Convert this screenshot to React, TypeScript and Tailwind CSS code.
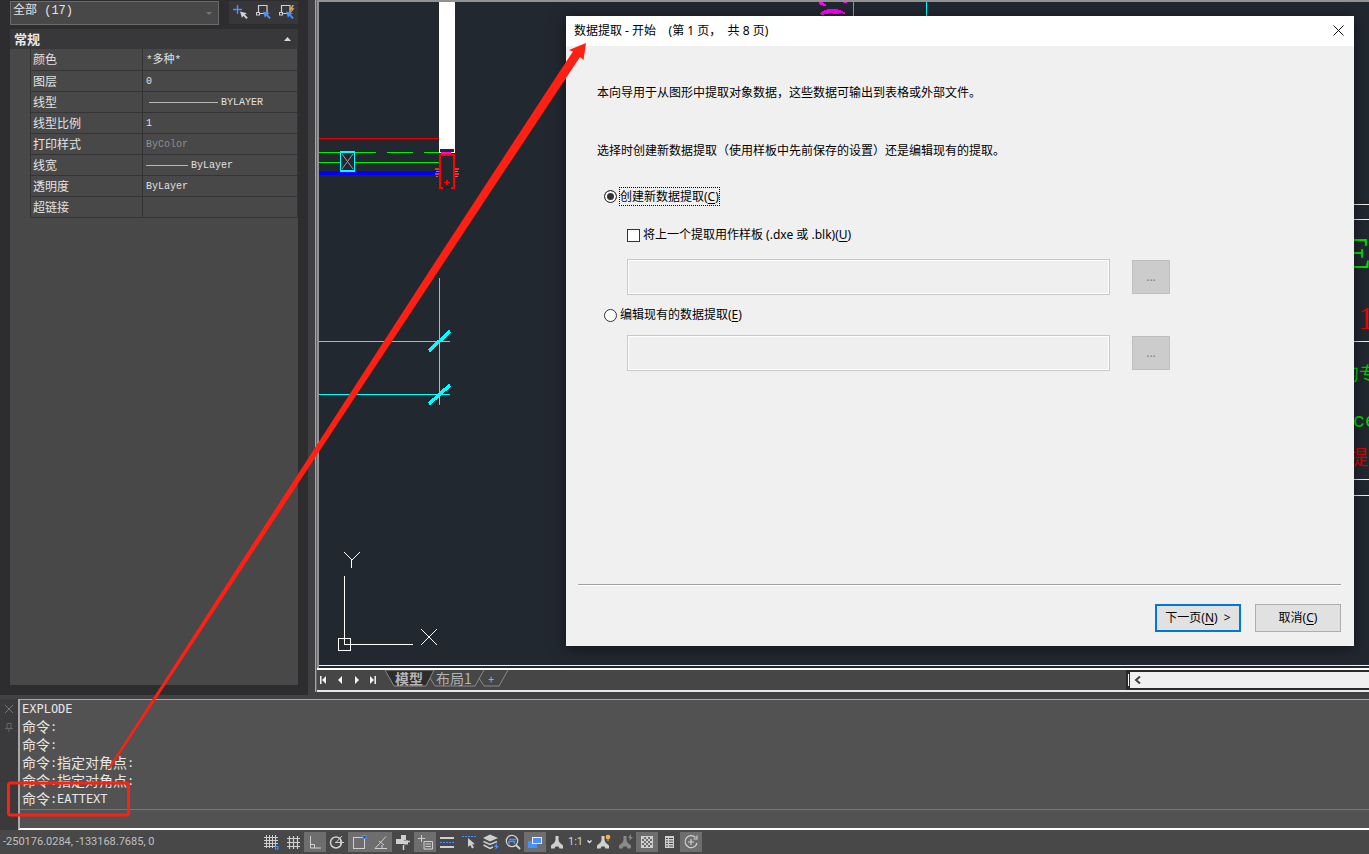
import type { ReactNode } from "react";

const SONG = "font-['Liberation_Mono','Noto_Sans_CJK_SC',monospace]";
const INK = "#cfcfcf";
const BLUE = "#4a90ff";

type Row = { label: string; value: string; line?: "long" | "short"; dim?: boolean; cjk?: boolean };

const rows: Row[] = [
  { label: "颜色", value: "*多种*", cjk: true },
  { label: "图层", value: "0" },
  { label: "线型", value: "BYLAYER", line: "long" },
  { label: "线型比例", value: "1" },
  { label: "打印样式", value: "ByColor", dim: true },
  { label: "线宽", value: "ByLayer", line: "short" },
  { label: "透明度", value: "ByLayer" },
  { label: "超链接", value: "" },
];

function PickIcon({ kind }: { kind: "add" | "select" | "quick" }) {
  const arrow = kind === "add" ? "#d4d4d4" : BLUE;
  return (
    <svg width="18" height="18" viewBox="0 0 18 18" fill="none" aria-hidden="true">
      {kind === "add" ? (
        <path d="M1 5.500h9M5.500 1v9" stroke={BLUE} strokeWidth="1.400" />
      ) : (
        <>
          <path d="M3.500 8V1.500h8.500V9.500H5" stroke="#d0d0d0" strokeWidth="1.200" />
          <rect x="1.500" y="8.500" width="3" height="2.500" stroke="#d0d0d0" />
        </>
      )}
      <path d="M8 7.500l7 1.800-2.200 1.200 3 3.200-1.500 1.300-3-3.200-1.300 2.200z" fill={arrow} />
      {kind === "quick" && <path d="M14.500 1l-3 4.500h2.200L12.500 9l4-4.800h-2.300L16 1z" fill="#f5a942" />}
    </svg>
  );
}

function Properties() {
  return (
    <aside className="flex w-[308px] shrink-0 flex-col bg-[#2d2d2f] pr-[10px] pb-[10px] pl-[10px]">
      <div className="flex h-[29px] items-start justify-between pt-px">
        <div className={`relative h-[24px] w-[209px] ${SONG}`}>
          <select
            aria-label="选择"
            className="block h-[24px] w-full appearance-none border border-[#6a6a6a] bg-[#484848] px-[2px] pb-[5px] text-[12px] text-[#e4e4e4]"
          >
            <option>全部 (17)</option>
          </select>
          <svg className="pointer-events-none absolute top-[11px] right-[7px]" width="6" height="3" aria-hidden="true">
            <path d="M0 0h6l-3 3z" fill="#747474" />
          </svg>
        </div>
        <div className="flex h-[23px] w-[69px] items-center justify-around bg-[#37373a]">
          <button aria-label="加选"><PickIcon kind="add" /></button>
          <button aria-label="选择对象"><PickIcon kind="select" /></button>
          <button aria-label="快速选择"><PickIcon kind="quick" /></button>
        </div>
      </div>
      <section className="flex-1 bg-[#484848]">
        <h2 className="flex h-[20px] items-center justify-between bg-[#38383a] pr-[7px] pl-[4px] font-['Noto_Sans_CJK_SC',sans-serif] text-[13px] leading-[18px] font-bold text-[#e8e8e8]">
          常规
          <svg width="7" height="4" aria-hidden="true"><path d="M0 4h7L3.500 0z" fill="#d8d8d8" /></svg>
        </h2>
        <div className="pl-[20px]">
          <table className="w-full table-fixed border-collapse border-r border-l border-[#343436] text-[#e2e2e2]">
            <tbody>
              {rows.map((r) => (
                <tr key={r.label} className="h-[21px] border-b border-[#343436]">
                  <th className="w-[112px] border-r border-[#343436] p-0 pl-[2px] text-left align-top font-['Noto_Sans_CJK_SC',sans-serif] text-[12px] leading-[20px] font-normal">
                    {r.label}
                  </th>
                  <td className="py-0 pr-0 pl-[3px] align-top">
                    <span className={`flex h-[20px] items-center pt-[2px] leading-[18px] ${SONG} ${r.cjk ? "text-[11px]" : "text-[10px]"} ${r.dim ? "text-[#8e8e8e]" : ""}`}>
                      {r.line === "long" && <span className="mr-[3px] ml-[3px] h-px w-[69px] bg-[#b8b8b8]" />}
                      {r.line === "short" && <span className="mr-[3px] h-px w-[42px] bg-[#b8b8b8]" />}
                      {r.value}
                    </span>
                  </td>
                </tr>
              ))}
            </tbody>
          </table>
        </div>
      </section>
    </aside>
  );
}

function Drawing() {
  return (
    <svg className="absolute inset-0 h-full w-full" fill="none" aria-hidden="true" shapeRendering="crispEdges">
      <g transform="translate(-319 -2)">
        <path d="M319 138.500H439" stroke="#e80000" />
        <path d="M319 152.500H376M387 152.500H413M424 152.500H455M319 162.500H439" stroke="#00f000" />
        <path d="M319 171h120v3H319z" fill="#0000ff" />
        <path d="M319 174.500H439" stroke="#0000ff" />
        <rect x="340.500" y="152" width="14" height="19" fill="#222830" stroke="#00ffff" strokeWidth="1.500" />
        <path d="M342 154l11 15M353 154l-11 15" stroke="#999" shapeRendering="auto" />
        <rect x="439" y="2" width="16" height="151" fill="#fff" />
        <rect x="440" y="149" width="14" height="3" fill="#222830" />
        <rect x="441" y="152" width="10" height="2" fill="#ff00ff" />
        <path d="M443 188h-3V155h14v33h-3" stroke="#ff0000" strokeWidth="2" />
        <path d="M444 187.500h7" stroke="#0000ff" />
        <path d="M444 182.500h6M447 180v5" stroke="#ff0000" strokeWidth="1.500" />
        <path d="M435 169h4M435 174h4M455 169h4M455 174h4" stroke="#e03030" strokeWidth="2" />
        <path d="M436 171h3M436 176h2M455 171h3M455 176h3" stroke="#9a8080" strokeWidth="1" />
        <path d="M319 341.500H450M319 394.500H450M439.500 278V405M926.500 2V16" stroke="#00ffff" />
        <path d="M853.500 2V16" stroke="#00d8d8" />
        <path d="M429 351l21-20M429 404l21-19" stroke="#00ffff" strokeWidth="3.500" />
        <path d="M819 2h3l5 3-3 1-5-2zM843 2h4l-1 1h-3zM819 14c3-4 8-5 14-5s11 2 14 6l-5-2-7 1-5-1-8 2z" fill="#ff00ff" />
        <path d="M344.500 576V644.500H413M338.500 638.500h12v12h-12z" stroke="#fff" />
        <path d="M344 552l8 8 8-8M351.500 560v8M421 629l16 16M437 629l-16 16" stroke="#fff" />
        <path d="M319 665.500H3000M1354 204.500H3000M1354 219.500H3000M1354 341.500H3000M1354 479.500H3000M1354 495.500H3000" stroke="#f2f2f2" />
        <g className="font-['Liberation_Serif','Noto_Sans_CJK_SC',serif]">
          <text x="1344" y="268" fontSize="44" fill="#00e000">E</text>
          <text x="1358" y="329" fontSize="32" fill="#e80000">1</text>
          <text x="1340" y="381" fontSize="19" fill="#00c800">的专</text>
        </g>
        <text x="1353" y="427" fontSize="20" fill="#00d800" className="font-['Liberation_Mono',monospace]">ce</text>
        <text x="1348" y="465" fontSize="20" fill="#d80000" className="font-['Noto_Sans_CJK_SC',sans-serif]">提</text>
      </g>
    </svg>
  );
}

function PathField({ label }: { label: string }) {
  return (
    <div className="flex items-center gap-[22px] pr-[184px] pl-[61px]">
      <input
        disabled
        aria-label={label}
        className="h-[36px] min-w-0 flex-1 border border-[#c8c8c8] bg-[#efefef] px-2 shadow-[inset_0_0_0_1px_#ffffff]"
      />
      <button disabled aria-label={`浏览${label}`} className="h-[34px] w-[38px] border border-[#bfbfbf] bg-[#cccccc] text-[12px] text-[#838383]">
        ...
      </button>
    </div>
  );
}

const radio =
  "size-[13px] appearance-none rounded-full border border-[#333] bg-white checked:bg-[#333] checked:shadow-[inset_0_0_0_2px_#fff]";

function Wizard() {
  return (
    <div
      role="dialog"
      aria-label="数据提取 - 开始"
      className="absolute top-[14px] left-[247px] flex min-h-[630px] w-[788px] flex-col bg-[#f0f0f0] font-['Noto_Sans','Noto_Sans_CJK_SC',sans-serif] text-[12px] leading-[20px] text-black shadow-[0_2px_14px_rgba(0,0,0,0.5)]"
    >
      <header className="flex h-[30px] items-center justify-between bg-white pr-[10px] pb-px pl-[8px]">
        <h1 className="whitespace-pre">数据提取 - 开始    (第 1 页，  共 8 页)</h1>
        <button aria-label="关闭">
          <svg width="11" height="11" fill="none" stroke="#111" aria-hidden="true"><path d="M.5.5l10 10M10.500.5l-10 10" /></svg>
        </button>
      </header>
      <form className="flex flex-1 flex-col pt-[37px]" onSubmit={(e) => e.preventDefault()}>
        <p className="px-[31px]">本向导用于从图形中提取对象数据，这些数据可输出到表格或外部文件。</p>
        <p className="mt-[38px] px-[31px]">选择时创建新数据提取（使用样板中先前保存的设置）还是编辑现有的提取。</p>
        <div className="mt-[25px] flex h-[20px] items-center gap-[2px] pl-[38px]">
          <input id="create" type="radio" name="mode" defaultChecked className={radio} />
          <label htmlFor="create" className="border border-dotted border-black leading-[17px]">
            创建新数据提取(<u className="underline-offset-2">C</u>)
          </label>
        </div>
        <div className="mt-[19px] flex h-[20px] items-center gap-[3px] pl-[61px]">
          <input id="template" type="checkbox" className="size-[13px] appearance-none border border-[#333] bg-white" />
          <label htmlFor="template">
            将上一个提取用作样板 (.dxe 或 .blk)(<u className="underline-offset-2">U</u>)
          </label>
        </div>
        <div className="mt-[14px]"><PathField label="样板文件" /></div>
        <div className="mt-[10px] flex h-[20px] items-center gap-[3px] pl-[38px]">
          <input id="edit" type="radio" name="mode" className={radio} />
          <label htmlFor="edit">
            编辑现有的数据提取(<u className="underline-offset-2">E</u>)
          </label>
        </div>
        <div className="mt-[10px]"><PathField label="现有数据提取" /></div>
        <footer className="mr-[13px] ml-[12px] mt-auto flex justify-end gap-[14px] border-t border-[#a0a0a0] pt-[19px] pb-[14px] shadow-[inset_0_1px_0_#fff]">
          <button className="h-[28px] w-[86px] border-2 border-[#0078d7] bg-[#e1e1e1] whitespace-pre">
            下一页(<u className="underline-offset-2">N</u>)  &gt;
          </button>
          <button type="button" className="h-[28px] w-[86px] border border-[#adadad] bg-[#e1e1e1]">
            取消(<u className="underline-offset-2">C</u>)
          </button>
        </footer>
      </form>
    </div>
  );
}

function NavIcon({ d }: { d: string }) {
  return <svg width="8" height="8" fill="#f4f4f4" aria-hidden="true"><path d={d} /></svg>;
}

function LayoutBar() {
  return (
    <div className="flex h-[20px] bg-[#464646]">
      <div className="flex w-[68px] items-center justify-between pr-[8px] pl-[3px]">
        <button aria-label="第一个"><NavIcon d="M0 0h1.500v8H0zM6 0v8L2 4z" /></button>
        <button aria-label="上一个"><NavIcon d="M6 0v8L2 4z" /></button>
        <button aria-label="下一个"><NavIcon d="M2 0v8l4-4z" /></button>
        <button aria-label="最后一个"><NavIcon d="M1 0v8l4-4zM5.500 0H7v8H5.500z" /></button>
      </div>
      <div className="relative flex font-['Noto_Sans_CJK_SC',sans-serif] text-[14px] leading-[16px] text-[#b4b4b4]">
        <svg className="absolute inset-0" width="126" height="17" fill="none" stroke="#8a8a8a" aria-hidden="true">
          <path d="M0 0l9 16h32l8-16z" fill="#2c2c2c" />
          <path d="M45 8l5 8h40l9-16M94 8l5 8h15l9-16" />
        </svg>
        <button className="relative w-[48px] pb-[4px] font-bold">模型</button>
        <button className="relative w-[42px] pb-[4px]">布局1</button>
        <button aria-label="新建布局" className="relative w-[32px] pb-[3px] text-[11px]">+</button>
      </div>
      <div className="flex-1" />
      <div className="flex w-[243px] items-center bg-[#2a2a2a]">
        <span className="mr-px ml-[2px] h-[12px] w-px bg-white" />
        <div className="flex h-[16px] flex-1 items-center bg-[#f0f0f0] pl-[4px]">
          <button aria-label="向左滚动">
            <svg width="7" height="8" fill="none" stroke="#404040" strokeWidth="2" aria-hidden="true"><path d="M6 .5L2 4l4 3.500" /></svg>
          </button>
        </div>
      </div>
    </div>
  );
}

const history = ["EXPLODE", "命令:", "命令:", "命令:指定对角点:", "命令:指定对角点:", "命令:EATTEXT"];

function CommandLine() {
  return (
    <section className="flex border-t-[4px] border-[#424244] bg-[#3a3a3c]">
      <div className="flex w-[18px] flex-col items-center gap-[10px] pt-[6px]">
        <button aria-label="关闭命令行">
          <svg width="8" height="8" fill="none" stroke="#747474" aria-hidden="true"><path d="M0 0l8 8M8 0L0 8" /></svg>
        </button>
        <button aria-label="固定">
          <svg width="8" height="9" fill="none" stroke="#666" aria-hidden="true"><path d="M2 .5h4v5H2zM0 5.500h8M4 6v3" /></svg>
        </button>
      </div>
      <div className="flex-1 border-t border-b-2 border-l-2 border-t-[#a8a8a8] border-b-white border-l-[#a8a8a8] bg-[#525252]">
        <ul className="border-b border-[#777] pb-px pl-[2px] font-['DejaVu_Sans_Mono','Noto_Sans_CJK_SC',monospace] leading-[18px] text-[#e6e6e6]">
          {history.map((line, i) => {
            const cjk = line.startsWith("命令");
            const rest = cjk ? line.slice(3) : line;
            return (
              <li key={i} className="flex h-[18px] items-center">
                {cjk && <span className="text-[14px]">命令</span>}
                {cjk && <span className="w-[7px] text-center text-[12px]">:</span>}
                {rest.startsWith("指") ? (
                  <>
                    <span className="text-[14px]">指定对角点</span>
                    <span className="w-[7px] text-center text-[12px]">:</span>
                  </>
                ) : (
                  <span className="text-[12px]">{rest}</span>
                )}
              </li>
            );
          })}
        </ul>
        <input aria-label="命令输入" className="block h-[18px] w-full px-[3px] text-[12px] text-white outline-none" />
      </div>
    </section>
  );
}

function Tool({ label, on, children }: { label: string; on?: boolean; children: ReactNode }) {
  return (
    <button aria-label={label} aria-pressed={!!on} className={on ? "h-[20px] bg-[#6e6e6e]" : "h-[20px]"}>
      <svg width="22" height="20" viewBox="0 0 22 20" fill="none" stroke={INK} aria-hidden="true">
        {children}
      </svg>
    </button>
  );
}

const PERSON = "M9.500 4h3v4l1 2.500 3.500 3v3h-3.500l-1-2h-3l-1 2H5v-3l3.500-3 1-2.500z";

function StatusBar() {
  return (
    <footer className="flex h-[24px] items-center bg-[#484848]">
      <output className="w-[260px] pl-[3px] font-[Roboto,sans-serif] text-[11px] text-[#c0c0c0]">-250176.0284, -133168.7685, 0</output>
      <Tool label="模型空间栅格">
        <path d="M6.500 3v13M9.500 3v13M12.500 3v13M15.500 3v11M4 5.500h14M4 8.500h14M4 11.500h14M4 14.500h11" />
        <rect x="15.500" y="14.500" width="2.500" height="2.500" stroke={BLUE} />
      </Tool>
      <Tool label="捕捉"><path d="M7.500 4v13M11.500 4v13M15.500 4v13M5 6.500h13M5 10.500h13M5 14.500h13" strokeWidth="1.200" /></Tool>
      <Tool label="正交" on><path d="M6.500 4v12H17M6.500 12.500h4V16" /></Tool>
      <Tool label="极轴">
        <circle cx="10" cy="10.500" r="5.500" strokeWidth="1.500" />
        <path d="M9 10.500h9M10 10.500L16 4M14.500 7v7" />
      </Tool>
      <Tool label="对象捕捉" on>
        <rect x="5.500" y="5.500" width="11" height="11" />
        <rect x="15" y="3.500" width="3" height="3" stroke={BLUE} fill="#484848" />
      </Tool>
      <Tool label="对象追踪" on><path d="M17 16.500H5L16 4.500M9 9l5 4M12 16v-3" /></Tool>
      <Tool label="动态 UCS">
        <path d="M9 3h5v5h-2v4H4V7h5z" fill={INK} stroke="none" />
        <path d="M14 9.500h4M11.500 13v5" strokeWidth="1.500" />
        <path d="M12 8.500h4v4h-4z" fill={INK} stroke="none" />
      </Tool>
      <Tool label="动态输入" on>
        <path d="M4 6.500h7M7.500 3v7" />
        <path d="M10 9.500h8.500v7.500H10zM11.500 12h5.500M11.500 14.500h5.500" />
      </Tool>
      <Tool label="线宽">
        <path d="M4 6h14M4 15h14" strokeWidth="2" />
        <path d="M4 10.500h14" stroke={BLUE} strokeDasharray="2 1" />
      </Tool>
      <Tool label="选择循环">
        <path d="M4 4.500h14" stroke={BLUE} strokeDasharray="2 1" />
        <path d="M10 6v9l2.200-2 1.800 3.500 2-1-1.800-3.300H17z" fill={INK} stroke="none" />
      </Tool>
      <Tool label="透明度">
        <path d="M3 6l7-3.500L18 6l-8 3.500z" fill={INK} stroke="none" />
        <path d="M3.500 9.500l6.500 3 7-3M3.500 13l6.500 3.500 3-1.500" strokeWidth="1.500" />
        <path d="M17 11l-3 4h2l-1 3 4-4h-2z" fill={BLUE} stroke="none" />
      </Tool>
      <Tool label="快捷特性">
        <circle cx="10" cy="9" r="5.700" strokeWidth="1.300" />
        <path d="M7 7.500h7M7 12V9.500h5.500V12" stroke={BLUE} strokeWidth="1.500" />
        <path d="M14 13l4 4" strokeWidth="2" />
      </Tool>
      <Tool label="模型" on>
        <path d="M4 9h9v7H4z" fill={BLUE} stroke="none" />
        <rect x="8.500" y="5.500" width="9" height="6" fill={BLUE} stroke="#eee" />
      </Tool>
      <Tool label="注释比例"><path d={PERSON} fill={INK} stroke="none" /></Tool>
      <button className="flex w-[24px] items-center justify-between font-[Roboto,sans-serif] text-[11px] text-[#d0d0d0]">
        1:1
        <svg width="5" height="4" fill="none" stroke="#e0e0e0" strokeWidth="1.500" aria-hidden="true"><path d="M.5.5l2 2 2-2" /></svg>
      </button>
      <Tool label="注释可见性">
        <path d={PERSON} fill={INK} stroke="none" />
        <circle cx="16" cy="5" r="2.300" fill="#f7b04a" stroke="none" />
        <path d="M16 7v2" stroke="#f7b04a" />
      </Tool>
      <Tool label="自动缩放">
        <path d={PERSON} fill="#8a8a8a" stroke="none" />
        <path d="M17 2l-3 4h2l-1 3 4-4h-2z" fill="#8a8a8a" stroke="none" />
      </Tool>
      <Tool label="图案填充" on>
        <rect x="5.500" y="4.500" width="11" height="11" />
        <path d="M6 6h10M6 10h10M6 14h10" strokeWidth="2" strokeDasharray="2 2" />
        <path d="M8 8h8M8 12h8" strokeWidth="2" strokeDasharray="2 2" />
      </Tool>
      <Tool label="快捷菜单">
        <path d="M7 4h9v12H7z" fill={INK} stroke="none" />
        <path d="M8 6.500h7M8 9h7M8 11.500h7M8 14h7" stroke="#484848" />
        <path d="M10.500 6v9" />
      </Tool>
      <Tool label="清理屏幕" on>
        <path d="M15.500 5.500A6 6 0 1 0 17 11M17 3.500v3.500h-3.500M8 10h6M11 7v6" strokeWidth="1.200" />
      </Tool>
    </footer>
  );
}

export default function App() {
  return (
    <div className="relative flex min-h-screen flex-col overflow-hidden bg-[#2d2d2f]">
      <main className="flex flex-1">
        <Properties />
        <div className="flex min-w-0 flex-1 flex-col border-l-[7px] border-[#404042]">
          <div className="flex flex-1 flex-col border-l border-[#a6a6a6]">
            <div className="flex flex-1 flex-col border-l border-[#686868]">
              <div className="relative flex-1 overflow-hidden border-t-2 border-l-2 border-[#929292] bg-[#222830]">
                <Drawing />
                <Wizard />
              </div>
              <div className="h-[2px] bg-white" />
              <LayoutBar />
              <div className="h-[2px] bg-[#e8e8e8]" />
            </div>
          </div>
          <div className="h-[3px] bg-[#404042]" />
        </div>
      </main>
      <CommandLine />
      <StatusBar />
      <svg className="pointer-events-none absolute inset-0 h-full w-full" aria-hidden="true">
        <path d="M586 43L569 50l4 1.500L560 71 430 270 333 420 108 768l2 1L340 420 439 270 560 87l20-30 3.500 3z" fill="#ff2014" />
        <rect x="8.500" y="783" width="120" height="32" rx="2" fill="none" stroke="#ff2014" strokeWidth="3" />
      </svg>
    </div>
  );
}
